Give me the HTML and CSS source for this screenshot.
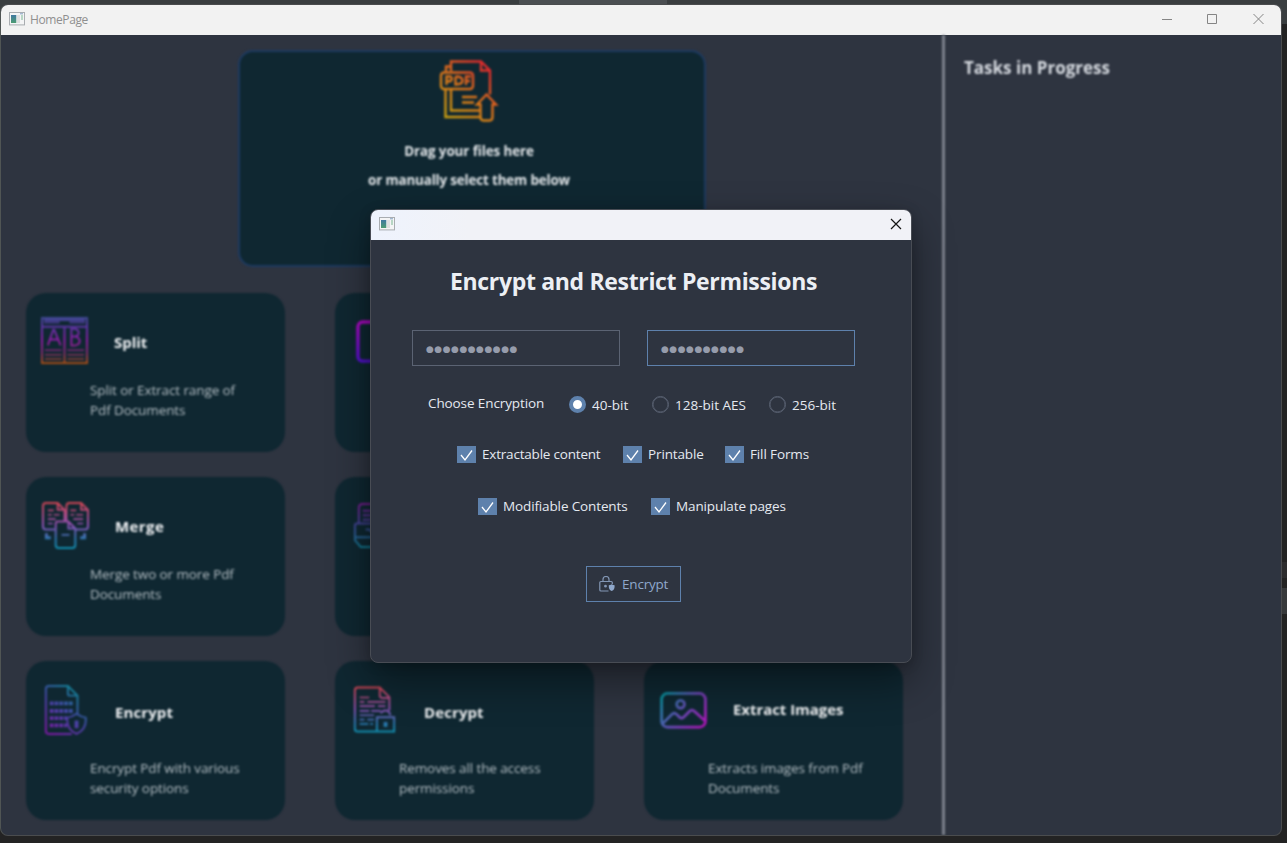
FILE: index.html
```html
<!DOCTYPE html>
<html lang="en">
<head>
<meta charset="utf-8">
<title>HomePage</title>
<link rel="stylesheet" href="styles.css">
</head>
<body>
<svg class="defs" width="0" height="0">
  <defs>
    <linearGradient id="g-pdf" gradientUnits="userSpaceOnUse" x1="52" y1="4" x2="6" y2="58"><stop offset="0.1" stop-color="#dd2c2c"/><stop offset="0.5" stop-color="#d9701c"/><stop offset="1" stop-color="#c9a010"/></linearGradient>
    <linearGradient id="g-split" gradientUnits="userSpaceOnUse" x1="0" y1="0" x2="0" y2="48"><stop offset="0" stop-color="#3e4a92"/><stop offset="0.2" stop-color="#5a35a0"/><stop offset="0.5" stop-color="#8f1ba4"/><stop offset="0.75" stop-color="#7c2a6c"/><stop offset="1" stop-color="#a8500f"/></linearGradient>
    <linearGradient id="g-warm" gradientUnits="userSpaceOnUse" x1="0" y1="0" x2="0" y2="48"><stop offset="0" stop-color="#cf4450"/><stop offset="0.5" stop-color="#8c50b4"/><stop offset="0.8" stop-color="#2b77ae"/><stop offset="1" stop-color="#0f8fae"/></linearGradient>
    <linearGradient id="g-enc" gradientUnits="userSpaceOnUse" x1="40" y1="6" x2="6" y2="48"><stop offset="0" stop-color="#0c8b96"/><stop offset="0.5" stop-color="#4646a6"/><stop offset="1" stop-color="#7d1aa6"/></linearGradient>
    <linearGradient id="g-img" gradientUnits="userSpaceOnUse" x1="2" y1="2" x2="46" y2="36"><stop offset="0" stop-color="#06949c"/><stop offset="0.5" stop-color="#6a4cb8"/><stop offset="1" stop-color="#b312b8"/></linearGradient>
    <linearGradient id="g-vio" gradientUnits="userSpaceOnUse" x1="0" y1="0" x2="0" y2="44"><stop offset="0" stop-color="#b008c0"/><stop offset="1" stop-color="#5010d0"/></linearGradient>
    <linearGradient id="g-cool" gradientUnits="userSpaceOnUse" x1="0" y1="0" x2="0" y2="46"><stop offset="0" stop-color="#7c1a92"/><stop offset="0.5" stop-color="#3f4696"/><stop offset="1" stop-color="#107c92"/></linearGradient>
    <linearGradient id="g-app" x1="0" y1="0" x2="0" y2="1"><stop offset="0" stop-color="#3f78a0"/><stop offset="1" stop-color="#4c9c72"/></linearGradient>
    <symbol id="app" viewBox="0 0 16 14">
      <rect x=".5" y=".5" width="15" height="12.4" fill="#f4f5f6" stroke="#a9adb1"/>
      <rect x="2" y="3" width="5.3" height="8" fill="url(#g-app)"/>
      <rect x="8" y="3" width="3" height="8" fill="#dedfe0"/>
      <rect x="12" y="3" width="2" height="5" fill="#b7d6c4"/>
      <path d="M11 1.8h3" stroke="#7f9fc0"/>
    </symbol>
  </defs>
</svg>

<main class="window">
  <header class="titlebar">
    <svg class="app-icon" width="16" height="14"><use href="#app"/></svg>
    <span class="titlebar-text">HomePage</span>
    <svg class="controls" width="104" height="12" viewBox="0 0 104 12"><path d="M1 6.500h10M46.500 1.500h9v9h-9zM92.500 1l10 10M102.500 1l-10 10" fill="none" stroke="#858585"/></svg>
  </header>

  <div class="body">
    <section class="home">
      <div class="drop">
        <svg width="60" height="64" viewBox="0 0 60 64" fill="none" stroke="url(#g-pdf)" stroke-width="2.400">
          <path d="M12 12V2.500h30l9 9v24M42 2.500v9h9M12 7.500H7v5M6.500 30v28H41M12 30v21.500h29"/>
          <rect x="2" y="13.500" width="32" height="16.500" rx="3"/>
          <path d="M7.500 26v-8.500h4q2.500 2.300 0 4.700h-4M16.500 17.500v8q7 0 7-4t-7-4M27 26v-8.500h5M27 22h4"/>
          <path d="M23 38h15M23 43.500h12M47.500 35.500l-9.500 10h3.500v12q0 4 3 4h6q3 0 3-4v-12H57z"/>
        </svg>
        <p class="drop-a">Drag your files here</p>
        <p class="drop-b">or manually select them below</p>
      </div>

      <div class="cards">
        <article class="card">
          <svg class="icon" viewBox="0 0 48 48" fill="none" stroke="url(#g-split)" stroke-width="2">
            <rect x="1" y="1" width="46" height="46"/>
            <path d="M1 10h46M24 10v37M3 5.500h16M29 5.500h16M3 3h42" />
            <path d="M7 29l5.500-16h1L20 29M9 23h9M31 12v17h4q4.500-1 4.500-4.500T35 20h-4 3.500q4-1 4-4t-4-4z"/>
            <path d="M4 34h17M4 38.500h17M4 43h17M27 34h17M27 38.500h17M27 43h17" stroke-width="1.500"/>
          </svg>
          <h2 class="name name-split">Split</h2>
          <p class="desc">Split or Extract range of<br>Pdf Documents</p>
        </article>
        <article class="card">
          <svg class="icon icon-vio" viewBox="0 0 48 48" fill="none" stroke="url(#g-vio)" stroke-width="3.500"><rect x="2" y="2" width="44" height="40" rx="5"/></svg>
        </article>
        <article class="card"></article>

        <article class="card">
          <svg class="icon icon-merge" viewBox="0 0 48 48" fill="none" stroke="url(#g-warm)" stroke-width="2">
            <path d="M13 28H4q-3 0-3-3V4q0-3 3-3h12l7 7v12M16 1v7h7M34 28h10q3 0 3-3V8l-7-7H28q-3 0-3 3v16M40 1v7h7"/>
            <path d="M16 20h11l7 7v17q0 3-3 3H17q-3 0-3-3V22q0-2 2-2M27 20v7h7"/>
            <path d="M6 8.500h6M6 13h4M12 13h6M6 17.500h8M6 22h5M29 8.500h6M29 13h4M35 13h7M32 17.500h10M36 22h6M20 33.500h8" stroke-width="1.700"/>
            <path d="M4.500 32v4.500H9M43.500 32v4.500H39" stroke-width="3"/>
          </svg>
          <h2 class="name name-merge">Merge</h2>
          <p class="desc">Merge two or more Pdf<br>Documents</p>
        </article>
        <article class="card">
          <svg class="icon icon-cool" viewBox="0 0 48 48" fill="none" stroke="url(#g-cool)" stroke-width="2"><path d="M6 20V5q0-4 4-4h34v20M4 21h40v14H2V23q0-2 2-2M2 35v3l6 7h38M10 8h30M10 12.500h30M10 17h30M21 33l-4-6h-4"/></svg>
        </article>
        <article class="card"></article>

        <article class="card">
          <svg class="icon icon-enc" viewBox="0 0 48 52" fill="none" stroke="url(#g-enc)" stroke-width="2">
            <path d="M30 51H6q-3 0-3-3V4q0-3 3-3h20l10 10v19M26 1v8q0 2 2 2h8"/>
            <path d="M7 19h25M7 27h25M7 34.500h18M7 42h18" stroke-width="4" stroke-dasharray="4 1"/>
            <path d="M35 30q5 3.500 9.500 4c1 8-3 14-9.500 17-6.500-3-10.500-9-9.500-17Q30 33.500 35 30z"/>
            <path d="M35 37v8" stroke-width="4"/>
          </svg>
          <h2 class="name name-enc">Encrypt</h2>
          <p class="desc desc-low">Encrypt Pdf with various<br>security options</p>
        </article>
        <article class="card">
          <svg class="icon icon-dec" viewBox="0 0 48 48" fill="none" stroke="url(#g-warm)" stroke-width="2">
            <path d="M25 47H6q-3 0-3-3V4q0-3 3-3h23l10 10v14M29 1v8q0 3 3 3h7M26 32h18v15H26zM30 28q2-3 5-3 4 0 5 5M35 37v5"/>
            <path d="M8 11.500h10M8 16h5M16 16h19M8 20.500h16M27 20.500h8M8 25.500h10M20 25.500h10M8 30h15M8 34.500h5M16 34.500h7M8 39h9M19 39h3" stroke-width="1.700"/>
            <path d="M35 37v5" stroke-width="4"/>
          </svg>
          <h2 class="name name-dec">Decrypt</h2>
          <p class="desc desc-low">Removes all the access<br>permissions</p>
        </article>
        <article class="card">
          <svg class="icon icon-img" viewBox="0 0 48 38" fill="none" stroke="url(#g-img)" stroke-width="2.800">
            <rect x="1.500" y="1.500" width="45" height="34.500" rx="6"/>
            <circle cx="21" cy="12.500" r="4"/>
            <path d="M2 33L12 23q2.500-2.500 5 0l3 3q2.500 2 5-1l5-5q2.500-3 5.500 0L46.500 30"/>
          </svg>
          <h2 class="name name-img">Extract Images</h2>
          <p class="desc desc-low">Extracts images from Pdf<br>Documents</p>
        </article>
      </div>
    </section>
    <aside class="tasks"><h2 class="tasks-title">Tasks in Progress</h2></aside>
  </div>
</main>

<div class="dialog" role="dialog">
  <header class="dialog-bar">
    <svg width="16" height="14"><use href="#app"/></svg>
    <svg width="12" height="12" viewBox="0 0 12 12"><path d="M1 1l10 10M11 1L1 11" stroke="#151515" stroke-width="1.200"/></svg>
  </header>
  <div class="dialog-body">
    <h1 class="heading">Encrypt and Restrict Permissions</h1>
    <div class="fields">
      <div class="field">●●●●●●●●●●●</div>
      <div class="field field-focus">●●●●●●●●●●</div>
    </div>
    <div class="radios">
      <span class="choose">Choose Encryption</span>
      <label class="radio r1"><i class="dot dot-on"></i><span>40-bit</span></label>
      <label class="radio r2"><i class="dot"></i><span>128-bit AES</span></label>
      <label class="radio r3"><i class="dot"></i><span>256-bit</span></label>
    </div>
    <div class="checks">
      <label class="check c1"><svg class="box" viewBox="0 0 19 17"><path d="M4 9l4 5 7-9.500"/></svg><span>Extractable content</span></label>
      <label class="check c2"><svg class="box" viewBox="0 0 19 17"><path d="M4 9l4 5 7-9.500"/></svg><span>Printable</span></label>
      <label class="check c3"><svg class="box" viewBox="0 0 19 17"><path d="M4 9l4 5 7-9.500"/></svg><span>Fill Forms</span></label>
    </div>
    <div class="checks checks-2">
      <label class="check c4"><svg class="box" viewBox="0 0 19 17"><path d="M4 9l4 5 7-9.500"/></svg><span>Modifiable Contents</span></label>
      <label class="check c5"><svg class="box" viewBox="0 0 19 17"><path d="M4 9l4 5 7-9.500"/></svg><span>Manipulate pages</span></label>
    </div>
    <button class="encrypt">
      <svg width="16" height="16" viewBox="0 0 16 16" fill="none" stroke="#8296b4" stroke-width="1.200"><path d="M9.500 15H2Q.8 15 .8 14V6.500q0-1 1-1h10.500q1 0 1 1V8M4 5.500V3.500a3 3 0 0 1 6 0v2"/><circle cx="6.500" cy="10.200" r=".8" fill="#8fa8cc"/><path d="M12.700 8.300q1.500 1 2.900 1c.3 3-.7 4.900-2.900 5.700-2.200-.8-3.200-2.700-2.900-5.700q1.400 0 2.900-1z" fill="#8fa8cc" stroke="none"/></svg>
      <span>Encrypt</span>
    </button>
  </div>
</div>
</body>
</html>
```
FILE: styles.css
```css
* { box-sizing: border-box; }
body {
  margin: 0; width: 1287px; height: 843px; overflow: hidden; padding: 4px 0 0 0;
  font-family: "Open Sans", "Noto Sans", sans-serif;
  background:
    linear-gradient(#4b4f52, #4b4f52) 519px 0 / 148px 5px no-repeat,
    linear-gradient(#3a3e40, #3a3e40) 0 0 / 1287px 24px no-repeat,
    linear-gradient(#2c2c2d, #2c2c2d) 1281px 562px / 6px 16px no-repeat,
    linear-gradient(#37393b, #37393b) 1281px 588px / 6px 26px no-repeat,
    #232323;
}
h1, h2, p { margin: 0; }
svg { display: block; flex: none; }
.defs { position: absolute; }

.window { width: 1282px; height: 832px; border: 1px solid #4a4c4e; border-left-color: #505554; border-radius: 8px; overflow: hidden; background: #2e3440; }
.titlebar { height: 30px; background: #f2f2f2; display: flex; align-items: center; padding: 0 16px 2px 8px; }
.titlebar-text { font-size: 12px; color: #8f8f8f; margin-left: 5px; letter-spacing: -.4px; }
.controls { margin-left: auto; }

.body { display: flex; height: 800px; filter: blur(1px); color: #e2e6e9; }
.home { width: 941px; padding: 15px 0 0 25px; }
.drop { width: 468px; height: 217px; margin: 0 0 26px 212px; border: 2px solid #1d3a60; border-radius: 15px; background: #0f2731; display: flex; flex-direction: column; align-items: center; padding: 7px 6px 0 0; font-size: 13.400px; font-weight: 700; white-space: nowrap; }
.drop-a { margin-top: 19px; line-height: 18px; letter-spacing: -.1px; }
.drop-b { margin-top: 11px; line-height: 18px; letter-spacing: -.15px; }
.cards { display: grid; grid-template-columns: repeat(3, 259px); grid-auto-rows: 159px; gap: 25px 50px; }
.card { background: #0f2731; border-radius: 20px; display: grid; grid-template-columns: 64px 1fr; grid-template-rows: 87px 1fr; }
.icon { width: 47px; height: 47px; margin: 24px 0 0 15px; }
.icon-vio { margin: 27px 0 0 21px; }
.icon-merge { margin: 25px 0 0 16px; }
.icon-cool { margin: 26px 0 0 18px; }
.icon-enc { width: 46px; height: 50px; margin: 24px 0 0 17px; }
.icon-dec { width: 46px; margin: 25px 0 0 17px; }
.icon-img { height: 37px; margin: 31px 0 0 16px; }
.name { font-size: 15px; line-height: 20px; margin: 39px 0 0 24px; letter-spacing: -.05px; color: #f0f2f4; white-space: nowrap; }
.name-merge { margin-left: 25px; letter-spacing: .4px; }
.name-enc, .name-dec { margin: 41px 0 0 25px; letter-spacing: .1px; }
.name-img { margin: 38px 0 0 25px; }
.desc { grid-column: 2; font-size: 13.500px; line-height: 20px; color: #b3bdc3; white-space: nowrap; letter-spacing: -.1px; }
.desc-low { padding-top: 10px; }
.tasks { flex: 1; border-left: 3px solid #7c818b; padding: 23px 0 0 19px; }
.tasks-title { font-size: 17px; line-height: 20px; color: #d5d9df; letter-spacing: 0; }

.dialog { position: absolute; left: 370px; top: 209px; width: 542px; height: 454px; border: 1px solid #484c54; border-radius: 8px; overflow: hidden; background: #2e3440; box-shadow: 0 18px 42px rgba(0,0,0,.42), 0 2px 12px rgba(0,0,0,.18); color: #e5e9f0; }
.dialog-bar { height: 30px; background: linear-gradient(90deg, #eef3fd, #f1f2f7 18%); display: flex; align-items: center; justify-content: space-between; padding: 0 9px 2px 8px; }
.dialog-body { display: flex; flex-direction: column; align-items: center; padding: 24px 15px 0 0; font-size: 13.500px; line-height: 20px; white-space: nowrap; }
.heading { font-size: 23px; line-height: 34px; color: #eceff4; letter-spacing: -.33px; }
.fields { display: flex; gap: 27px; margin-top: 32px; }
.field { width: 208px; height: 36px; border: 1px solid #5b6373; padding: 0 0 0 13px; font: 9px/36px "DejaVu Sans", sans-serif; letter-spacing: .5px; color: #969cab; }
.field-focus { border-color: #5e81ac; }
.radios { display: flex; align-self: flex-start; margin: 29px 0 0 57px; }
.choose { width: 141px; line-height: 17px; letter-spacing: -.1px; }
.radio { display: flex; align-items: center; gap: 6px; height: 19px; }
.r1 { width: 83px; } .r2 { width: 117px; }
.dot { width: 17px; height: 17px; border: 1.500px solid #596171; border-radius: 50%; box-shadow: inset 0 0 0 .5px #596171; }
.dot-on { border: 4px solid #5e81ac; background: #fff; box-shadow: none; }
.checks { display: flex; align-self: flex-start; margin: 30px 0 0 86px; }
.checks-2 { margin: 32px 0 0 107px; }
.check { display: flex; align-items: center; gap: 6px; letter-spacing: -.13px; }
.c1 { width: 166px; letter-spacing: -.2px; } .c2 { width: 102px; } .c4 { width: 173px; }
.box { width: 19px; height: 17px; background: #5e81ac; fill: none; stroke: #fff; stroke-width: 1.300; }
.encrypt { width: 95px; height: 36px; margin-top: 50px; border: 1px solid #5e81ac; background: none; color: #8fa8cc; font: 13.500px "Open Sans", sans-serif; letter-spacing: -.2px; display: flex; align-items: center; gap: 7px; padding: 0 0 0 12px; }
```
